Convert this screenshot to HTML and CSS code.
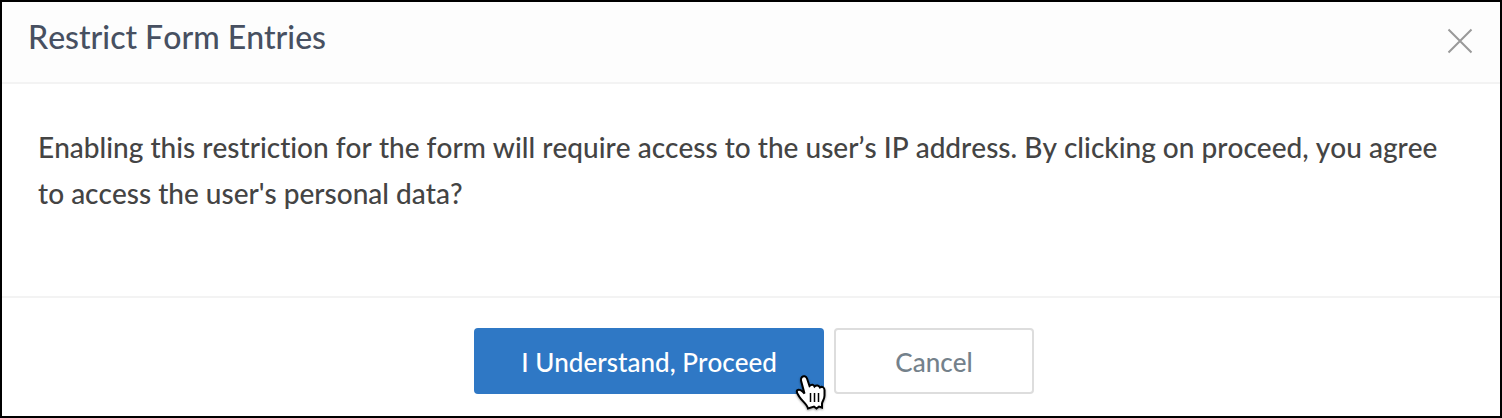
FILE: index.html
```
<!DOCTYPE html>
<html lang="en">
<head>
<meta charset="utf-8">
<title>Restrict Form Entries</title>
<link rel="stylesheet" href="styles.css">
</head>
<body>
<section class="dialog" role="dialog" aria-labelledby="dialog-title">
  <header class="dialog-header">
    <h1 class="dialog-title" id="dialog-title">Restrict Form Entries</h1>
    <button class="close" type="button" aria-label="Close">
      <svg class="close-icon" viewBox="0 0 26 26" aria-hidden="true"><path d="M1.500 1.500 24.500 24.500M24.500 1.500 1.500 24.500"/></svg>
    </button>
  </header>
  <p class="dialog-body">Enabling this restriction for the form will require access to the user’s IP address. By clicking on proceed, you agree to access the user's personal data?</p>
  <footer class="dialog-footer">
    <button class="button button-primary" type="button">I Understand, Proceed
      <svg class="cursor" viewBox="0 0 32 36" aria-hidden="true"><path d="M8 3C9.500 1.500 12 2 13 4.500L15.500 12C17.500 10 19.500 10.500 20.500 12.500C22.500 10.500 25 11.500 26 13.500C28 12 30.500 13.500 30.500 16V21.500C30.500 25.500 28.500 26.500 28 29.500V33.500L25 32.500L22.500 34.500L20 32.500L14 34.500C13 30 8 27 5.500 23C4 20.500 2 18.500 3 16.500C5 14.500 8 16.500 10.500 19.500L7 6.500Q6.500 4.500 8 3Z"/><path class="cursor-lines" d="M16.500 19V28M20.500 19V28M24.500 19V28"/></svg>
    </button>
    <button class="button button-secondary" type="button">Cancel</button>
  </footer>
</section>
</body>
</html>
```
FILE: styles.css
```
* { box-sizing: border-box; }
body { margin: 0; font-family: Lato, sans-serif; font-variant-ligatures: none; font-kerning: none; background: #fff; }
.dialog { min-height: 100vh; border: 2px solid #000; display: flex; flex-direction: column; }
.dialog-header { display: flex; justify-content: space-between; align-items: flex-start; padding: 15px 27px 25px 26px; background: #fdfdfd; border-bottom: 2px solid #f3f3f3; }
.dialog-title { margin: 0; font-size: 32px; line-height: 40px; font-weight: 500; color: #475061; }
.close { display: flex; margin: 11px 0 0; padding: 0; border: 0; background: none; }
.close-icon { width: 26px; height: 26px; fill: none; stroke: #999; stroke-width: 2; }
.dialog-body { flex: 1; margin: 0; padding: 40px 50px 40px 36px; font-size: 28px; line-height: 46px; font-weight: 500; color: #444; }
.dialog-footer { display: flex; justify-content: center; gap: 10px; padding: 30px 0 22px 6px; border-top: 2px solid #f3f3f3; }
.button { position: relative; height: 66px; padding: 2px 0 0; border-radius: 4px; font: 500 26px/32px Lato, sans-serif; font-kerning: none; }
.button-primary { width: 350px; border: 0; background: #2f78c5; color: #fff; }
.button-secondary { width: 200px; border: 2px solid #ddd; background: #fff; color: #74818b; }
.cursor { position: absolute; right: -2px; bottom: -16px; width: 32px; height: 36px; fill: #fff; stroke: #000; stroke-width: 2; filter: drop-shadow(0 1px 1px #0006); }
.cursor-lines { stroke-width: 1.5; }
```
